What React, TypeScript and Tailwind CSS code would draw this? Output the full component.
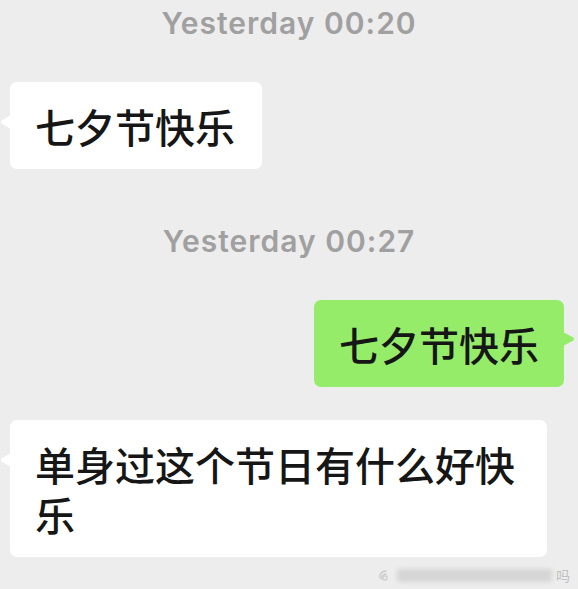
import React from "react";

const cjk = '"Noto Sans CJK SC", "Noto Sans", sans-serif';
const latin = 'Inter, "Liberation Sans", Arial, sans-serif';

function TailLeft({ color }: { color: string }) {
  return (
    <svg
      className="absolute left-[-10px] top-[33px]"
      width="11"
      height="14"
      viewBox="0 0 11 14"
    >
      <path d="M11 0 L1.6 5.6 Q0 7 1.6 8.4 L11 14 Z" fill={color} />
    </svg>
  );
}

function TailRight({ color }: { color: string }) {
  return (
    <svg
      className="absolute right-[-11px] top-[32px]"
      width="12"
      height="14"
      viewBox="0 0 12 14"
    >
      <path d="M0 0 L10.4 5.6 Q12 7 10.4 8.4 L0 14 Z" fill={color} />
    </svg>
  );
}

function Timestamp({ text, className }: { text: string; className: string }) {
  return (
    <div
      className={`h-[36px] text-center text-[30px] leading-[36px] font-semibold tracking-[1px] text-[#a0a0a0] ${className}`}
      style={{ fontFamily: latin }}
    >
      {text}
    </div>
  );
}

export default function App() {
  return (
    <div className="relative flex h-[589px] w-[578px] flex-col overflow-hidden bg-[#ededed]">
      <Timestamp text="Yesterday 00:20" className="mt-[5px]" />

      <div className="mt-[41px] flex pl-[10px]">
        <div
          className="relative rounded-[7px] bg-white py-[18.5px] pl-[25px] pr-[27px] text-[40px] font-medium leading-[50px] text-[#161616]"
          style={{ fontFamily: cjk }}
        >
          <TailLeft color="#ffffff" />
          七夕节快乐
        </div>
      </div>

      <Timestamp text="Yesterday 00:27" className="mt-[54px]" />

      <div className="mt-[41px] flex justify-end pr-[14px]">
        <div
          className="relative rounded-[7px] bg-[#95ec69] py-[18.5px] pl-[25px] pr-[25px] text-[40px] font-medium leading-[50px] text-[#161616]"
          style={{ fontFamily: cjk }}
        >
          <TailRight color="#95ec69" />
          七夕节快乐
        </div>
      </div>

      <div className="mt-[33px] flex pl-[10px]">
        <div
          className="relative max-w-[537px] rounded-[7px] bg-white py-[18.5px] pl-[25px] pr-[25px] text-[40px] font-medium leading-[50px] text-[#161616]"
          style={{ fontFamily: cjk }}
        >
          <TailLeft color="#ffffff" />
          单身过这个节日有什么好快乐
        </div>
      </div>

      <div className="absolute bottom-[6px] right-[8px] flex items-center gap-[4px]">
        <svg width="16" height="16" viewBox="0 0 16 16" className="opacity-70">
          <path
            d="M3 11 C2 7 5 4 9 4 M5 12 C4 9 6 7 9 7"
            stroke="#bdbdbd"
            strokeWidth="1.4"
            fill="none"
            strokeLinecap="round"
          />
          <circle cx="8" cy="11" r="2.2" stroke="#bdbdbd" strokeWidth="1.2" fill="none" />
        </svg>
        <div className="h-[13px] w-[155px] rounded-[2px] bg-[#d6d6d6] blur-[2px]" />
        <span
          className="text-[14px] leading-[16px] text-[#c0c0c0]"
          style={{ fontFamily: cjk }}
        >
          吗
        </span>
      </div>
    </div>
  );
}
